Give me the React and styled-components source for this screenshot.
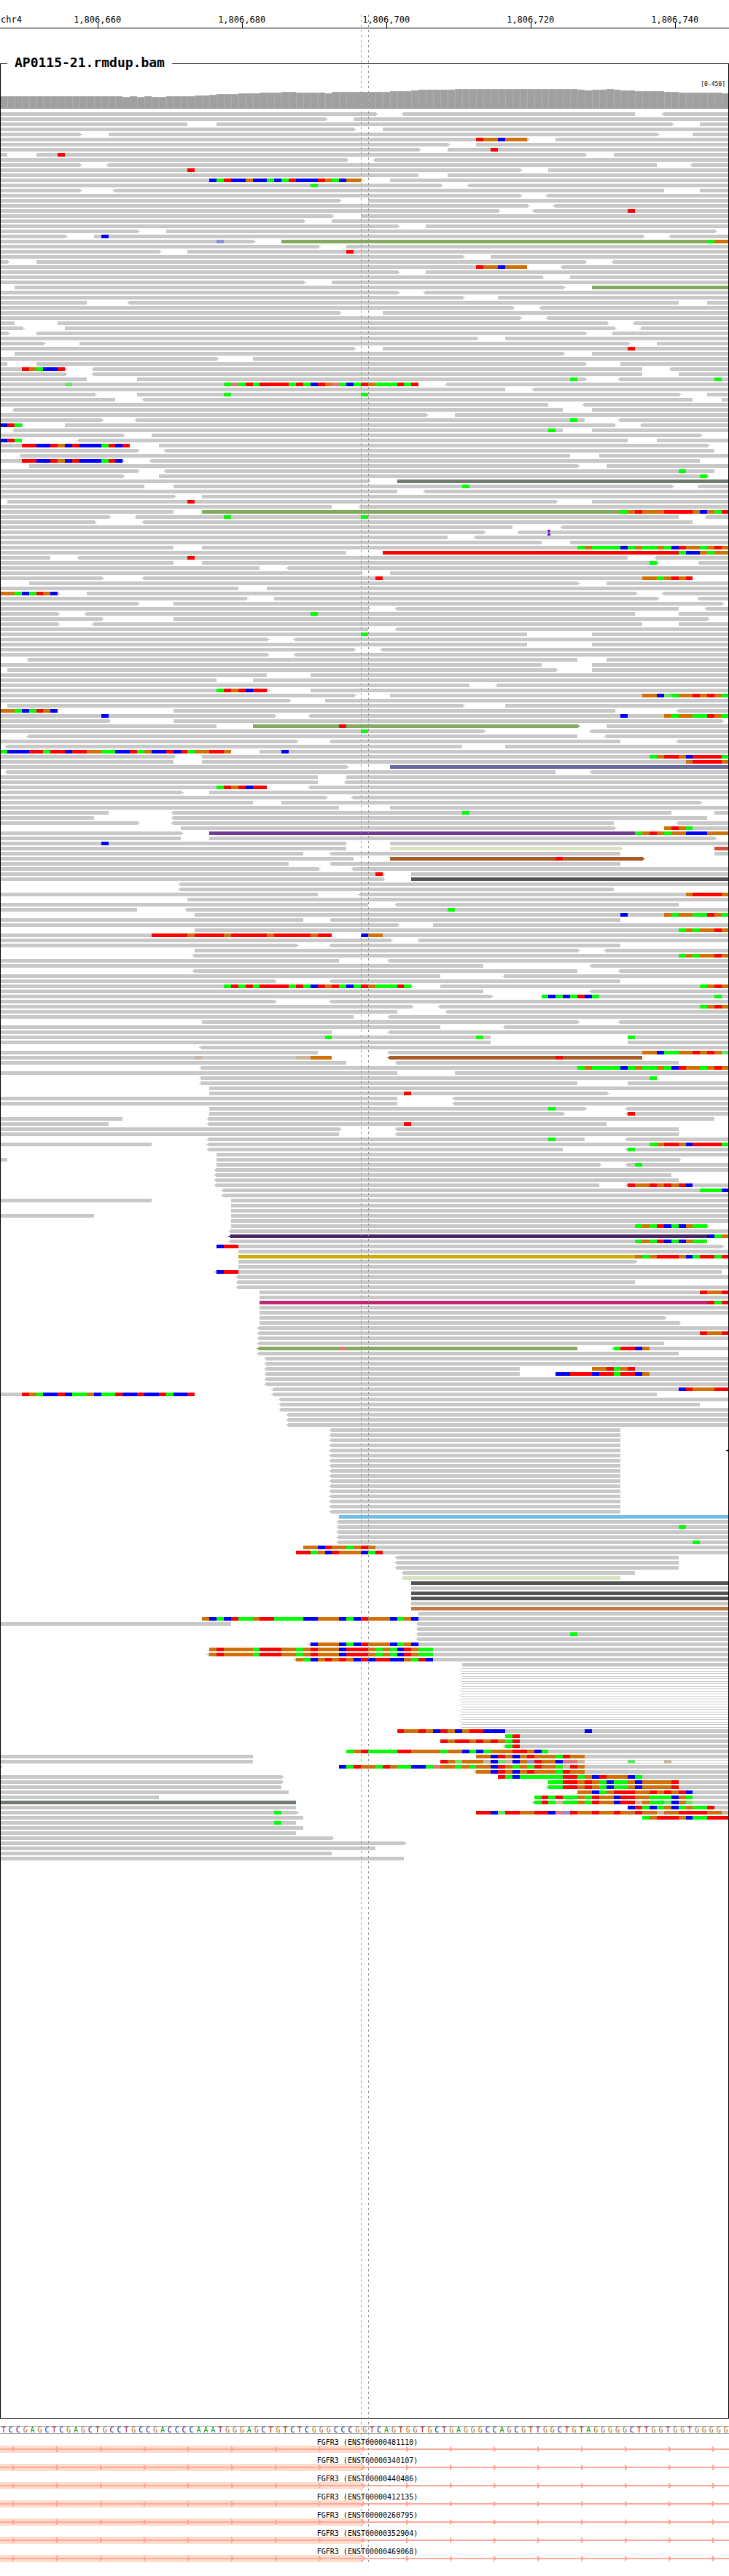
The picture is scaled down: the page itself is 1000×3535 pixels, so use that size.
import React from "react";
import styled, { createGlobalStyle, css } from "styled-components";

const BASES = 101;
const ROW_PITCH = 7;
const READ_HEIGHT = 5;
const pct = (bases) => `${(bases / BASES) * 100}%`;

const BASE_COLORS = {
  A: "#00ff00",
  C: "#0000ff",
  G: "#d17105",
  T: "#ff0000",
  a: "#64e364",
  c: "#8e8edc",
  g: "#cbb49c",
  t: "#e07676",
};

const LETTER_COLORS = { A: "#109610", C: "#14148c", G: "#a66a1e", T: "#aa1010" };

/* Fill of a read, keyed by the letter in front of its span. */
const READ_COLORS = {
  "": "#c8c8c8",
  v: "#86a960",
  s: "#6f7a70",
  r: "#ff0000",
  i: "#666a9f",
  p: "#703a94",
  l: "#d8e3c0",
  o: "#d9503a",
  n: "#a85b26",
  d: "#545454",
  u: "#4b2666",
  y: "#d4ab00",
  m: "#be2773",
  b: "#6ebee6",
  k: "#c67742",
  x: "#222222",
};

const SEQUENCE =
  "TCCGAGCTCGAGCTGCCTGCCGACCCCAAATGGGAGCTGTCTCGGGCCCGG" +
  "TCAGTGGTGCTGAGGGCCAGCGTTGGCTGTAGGGGGCTTGGTGGTGGGGG";

/* One line per row. "<12-40>" is a read with its strand arrows, "12:ACG" a run
   of mismatched bases, "12!" an insertion; an open end runs off the view. */
const ROWS = `-52> <56-88 <92-
-45> 49-
-26 30-93> 97-
-49> 53-
-11> 15-91> 96-
-73> 77- 66:TGGCGGG
-62> 66-
-58> 62- 68:T
-1 5-81> 85- 8:T
-48> <52-
-11> <15-91 <96-
-72> 76- 26:T
-58 62-
-50> 54- 29:CATCCGCCACATCCCTGACGG
-61> <65- 43:A
-11> <16-92 97-
-72> <76-
-47> 51-
-73> <77-
-69> <74- 87:T
-46> 50-
-42> 46-
-55> 59-
-19> 23-99>
-9> 13-89> <93- 14:C
-35> v39- 30:c 98:AGG
-44> 48-
-22> 26- 48:T
-64> 68-
-1> 5-81> <85-
-73 <78- 66:TGGCGGG
-55> 59-
-75> 79-
-42> 46-
2-78> v82-
-55> <59-
-64> 69-
-12 <18-94 98-
-71> <75-
-47> 53-
-72> <76-
-2 8-84> <88-
-3> 9-85> <89-
-1> 5-81> <85-
-66> 70-
-6> 11-87> 91-
-49> 53- 87:T
2-78> 82-
-30> 35-
-1 5-81> 86-
-9> <13-89 <93- 3:TGACCT
-9> <13-89 94-
-12 19-81> <86- 79:A 99:A
-58 <62- 9:a 31:AtATATTTTATACTGtACATGAAATAT
-70 <74-
-13> 19-94> 98- 31:A 50:A
-16 <20-96 100-
-76 <81-
<2-78 82-
-59> 63-
-14> <19-81 <86- 79:A
-3> 9-85> <89- 0:CTA
<2-78 82- 76:A
-17> 21-97>
-3 <11-87 91- 0:CTA
-18 22-98> 3:TTCCTGCTCCCATCT
-19> <23-99
<3-79 83-
-17> <21-97 3:TTCCTGCTCCCATC
4-80> 84-
-19> <23-99 94:A
-17> 22-98> 97:A
-51> s55-
-20 24-93> <97- 64:A
-55 <59-
-24> 28-
1-77> 82- 26:T
-46 <50-
-24 v28- 86:AGTGGGTTTTGCGAT
-15> <19-94 <98- 31:A 50:A
-13> <20-96
-71 <78-
-67> <72- 76!
-62 <66-
-75 79-
-24 28- 80:AGAAAACAGAAGACTGGAGTG
-48 r53- 94:ACCGAGG
-7 <11-87 <91- 26:T
-24 28-91> <97- 90:A
-36 <40-
-50> 54-
-14> <20-96 52:T 89:GGAGTGT
4-80> 84-
-33 37-
-8> 12-88> <92- 0:GGACATGC
-34> 38-91> <97-
-19> 24-100>
-51> <55-94 <98-
-8> <12-88 94- 43:A
-14> 24-98>
-8> <13-89 94-
-51 <55-
-73 82- 50:A
-37> <41-
-73 82-
-49> <53-
-37> <41-
<4-80 84-
-75 82-
1-77> 82-
-37 43-
-30 35-
-65 <69-
-37> 43- 30:ATGTCTT
-49> 54- 89:GGCaAGGTGTGA
-40> 45-
1-64> 70-
-8 24-85> <94- 0:GGACATGC
-38> <43- 14:C 86:C 92:GAGGAATGA
-15> 24-100>
-30 v35-80> 84- 47:T
-67> <82- 50:A
<4-80 <84-
-41> <46-86 <94-
<1-64 70-
-32 36- 39:C 0:ACCCTTATTCTTGGAACCTAGCCTCTAGGTTG
-24> 28- 90:AGTTGCTTTTA
-24 28- 95:GTTTTG
-48> i54-
<1-77 <82-
-44 48-
-44 <48-
-37 <43- 30:ATGTCTT
-25> 29-
-45> <49-
-35 39-97>
-47 54-
-15 <24-93 99- 64:A
-13 <24-98
-19> <24-85 <94-
25-85> 92- 92:GTGA
-25> p29- 88:AGTGAGGCCCGGG
-25 29-99>
-48 54- 14:C
-48 l54-86> o99-
-42 <46-86 99-
-49 n54-89> 77:T
-40 <46-86
-44> <49-
-53> 57- 52:T
-53> d57-
<25-
<25-85
-44 <50- 95:GTTTTG
26-
-51 <55-94
-19 <26- 62:A
27- 86:C 92:GAGGAATGA
-42 <46-86
-55> 60-
27- 94:AGAGGTG
-46 50- 21:TTTTTGTTTTGTTTTTGTTTTTGTT 50:CGG
-54> 58-
-41> <46-86
27-80> <84-
<27- 94:AGAGGTG
-47 <54-
-67 <82-
<27-80 <86-
-61 <70-
-38> <46-86
-57> 61- 31:ATATATTTTATACTGTACATGAAATA 97:AGTG
-67 <82-
-68> 75- 75:ACACATCA 99:A
-38> <46-
-57> <61- 97:AGTG
-55 <62-
-49 <54-
28-80> <86-
-61 <70-
-46 <54-
-68 87- 45:A 66:A 87:A
-68 87-
<28-
-44 <54- 89:GGCAAGGTGTGa
-46 n<54-89 27:g 41:ggGGG 77:T
-48 <55-94
<28- 80:AGAAAACAGAAGACTGGAGTG
-55 63-
<28-91 90:A
<28-80 87-
29-
29-84> 56:T
-55 <63-
-55 <63-
29-81> <87- 76:A
29-78> <87- 87:T
-17 <29-99
-15 <29-84 56:T
-47> <55-94
-47 <55-94
<29-81 <87- 76:A
-21 <29- 90:AGTTGCTTTTA
<29-78 <87- 87:A
30-
-1 30-94>
30-83> <87- 88:A
<30-
<30-93
<30-94
<30-83 <87- 87:TGGTGTGTC
<31- 97:AAAC
<31-
-21 32-
32-
32-
-13 32-
32-
32-98> 88:AGATCACGAA
<32-
u<32- 98:CAG
<32-98 88:AGATCACGAA
30-100> 30:CTT
33-
y33- 88:GAGTTTGCATTAT
33-88>
33-
<30-100 30:CTT
<33-
<33-88
<33-
36- 97:TGGT
36-
m36- 98:TAT
36-
36-
36-92>
36-94>
<36-
<36- 97:TGGT
<36-
<36-92
v<36-80 <85- 47:t 85:ATTCG
<36-94
<37-
<37-
<37-72 82- 82:GGTAGT
<37-72 77- 77:CCTTTCTTATTCG
<37-
<37-
<38- 94:CTGGGTT
-27 <38-91 3:TGACCTCAAGCAATCCTCCTACCT
<39-
<39-97
<39-
<40-
<40-
<40-
<46-86
<46-86
<46-86
<46-86
<46-86 x<101-
<46-86
<46-86
<46-86
<46-86
<46-86
<46-86
<46-86
<46-86
<46-86
<46-86
<46-86
<46-86
b47-
<47-
<47- 94:A
<47-
<47-
<47- 96:A
42- 42:GGCTGGAGTG
41- 41:TTAGCTGGGCAT
<55-94
<55-94
<55-94
<56-88
l<56-86
d57-
57-
d57-
d57-
57-
k57-
58-
28- 28:GCACTAAGTTAAAACCGGGCACTGGGCAGC
-32 <58-
<58-
<58- 79:A
<58-
<43- 43:CGGGCACTGGGCAGC
29- 29:GTGGGGATTTGGAGTGGGCTTTGAGACTGAA
<29- 29:GTGGGGATTTGGAGTGGGCTTTGAGACTGAA
<41- 41:GACGTGTGCTCTTCCGATC
64-
h<64-
h<64-
h<64-
h<64-
h<64-
h<64-
h<64-
h<64-
h<64-
h<64-
h<64-
h<64-
55- 55:TGGTGCTGCGTTCCC 81:C
70- 70:AT
61- 61:TGTTGTGTGAT
<70- 70:AT
48- 48:AGTAAAATTGGGGAGGCACAGGGTTGCA
-35 66- 66:GGCTGCGTGGGATGG
-35 h61- 61:TGaGGGgCagCGcTGGCttg 87:a 92:g
-0> 47- 47:CATGGATGAACCAtGGAGAGGCTGAGATGGAgTG
<66- 66:GGCTGCGTGGGATGG
-39> 69- 69:TACAAAAAATTAGCTGGGCA
-39> 76- 76:AATTGTGACAAGCGGGGT
-39 <76- 76:AATTGTGACAAGCGGGGT
-40 80- 80:GGCAGTTTGGTGTGTC
-22 74- 74:ATATAAGATGGCTTGGAAACGA
s-41 <74- 74:ATAgAAGATGGCTTgGAAaCGa
-41 87- 87:CTACAGCAGAAT
-41> 66- 38:A 66:TTCaTTGGTTCtcTGGTGGTGGTGGgGGTTTTGGg
-42 89- 89:AGTTTGCAATTT
-41 38:A
-42
-41
-46>
-56>
-52
-46
-56`.split("\n");

/* [bases, bar height] runs, left to right */
const COVERAGE = [
  [17, 16], [1, 15], [1, 16], [1, 15], [1, 16], [2, 15], [4, 16], [2, 17],
  [1, 18], [3, 19], [3, 20], [3, 21], [2, 22], [4, 21], [1, 20], [8, 22],
  [3, 23], [1, 24], [5, 25], [17, 26], [1, 25], [1, 24], [2, 25], [1, 26],
  [1, 25], [2, 24], [4, 23], [2, 22], [6, 21], [1, 20],
].flatMap(([count, height]) => Array(count).fill(height));

const TICKS = ["1,806,660", "1,806,680", "1,806,700", "1,806,720", "1,806,740"];

const TRANSCRIPTS = [
  "ENST00000481110",
  "ENST00000340107",
  "ENST00000440486",
  "ENST00000412135",
  "ENST00000260795",
  "ENST00000352904",
  "ENST00000469068",
];

const mono = css`
  font-family: "DejaVu Sans Mono", "Liberation Mono", monospace;
`;

const GlobalStyle = createGlobalStyle`
  body {
    margin: 0;
    background: #fff;
    color: #000;
  }
`;

const Page = styled.main`
  ${mono}
  position: relative;
  padding-top: 20px;
  margin-bottom: 19px;
  overflow: hidden;
`;

const Guide = styled.div`
  position: absolute;
  top: 20px;
  bottom: 0;
  left: ${(p) => pct(p.$base)};
  width: 1px;
  pointer-events: none;
  background: repeating-linear-gradient(#939393 0 3px, transparent 3px 7px);
`;

const Axis = styled.header`
  display: flex;
  height: 18px;
  overflow: hidden;
  border-bottom: 1px solid #000;
  font-size: 12px;
  line-height: 15px;
  white-space: nowrap;
`;

const Chromosome = styled.div`
  flex: none;
  width: ${pct(3.5)};
  text-indent: 1px;
`;

const Tick = styled.div`
  flex: none;
  width: ${pct(20)};
  text-align: center;

  &::after {
    content: "";
    display: block;
    width: 1px;
    height: 7px;
    margin: -4px 0 0 50%;
    background: #000;
  }
`;

const Panel = styled.fieldset`
  min-width: 0;
  margin: 38px 0 0;
  padding: 0 0 763px;
  border: 1px solid #000;
`;

const PanelTitle = styled.legend`
  margin-left: 9px;
  padding: 0 10px 4px;
  font-size: 18px;
  font-weight: bold;
  line-height: 17px;
`;

const PanelBody = styled.div`
  overflow: hidden;
`;

const RangeLabel = styled.div`
  height: 10px;
  padding: 12px 4px 0 0;
  text-align: right;
  font-size: 8px;
  line-height: 11px;
`;

const Chart = styled.svg`
  display: block;
  width: calc(100% + 2px);
  height: ${(p) => p.$height}px;
  margin: 0 -1px ${(p) => p.$gap || 0}px;
  shape-rendering: crispEdges;
  overflow: visible;
`;

const SequenceBar = styled.div`
  display: flex;
  height: 9px;
  margin-top: 10px;
  border: solid #9ca69c;
  border-width: 1px 0;
  font-size: 10px;
  line-height: 10px;
`;

const Nucleotide = styled.span`
  flex: 1 1 0;
  min-width: 0;
  text-align: center;
  color: ${(p) => LETTER_COLORS[p.$base]};
`;

const Transcripts = styled.section`
  padding-top: 1px;
`;

const Transcript = styled.div`
  height: 25px;
`;

const TranscriptName = styled.div`
  height: 10px;
  padding: 5px 0 0 8px;
  text-align: center;
  font-size: 10px;
  line-height: 12px;
`;

const TranscriptShape = styled.svg`
  display: block;
  width: 100%;
  height: 10px;
  shape-rendering: crispEdges;
`;

function parseRow(text) {
  const row = { reads: [], runs: [], insertions: [] };
  text.split(" ").forEach((token) => {
    const read = token.match(/^([a-z]?)(<?)(\d*)-(\d*)(>?)$/);
    if (read) {
      row.reads.push({
        kind: read[1],
        left: read[2] === "<",
        start: read[3] ? Number(read[3]) : 0,
        end: read[4] ? Number(read[4]) : BASES,
        right: read[5] === ">",
      });
      return;
    }
    if (token.endsWith("!")) {
      row.insertions.push(parseInt(token, 10));
      return;
    }
    const [start, letters] = token.split(":");
    let at = Number(start);
    letters.match(/(.)\1*/g).forEach((run) => {
      row.runs.push({ start: at, length: run.length, base: run[0] });
      at += run.length;
    });
  });
  return row;
}

const PARSED_ROWS = ROWS.map(parseRow);

function Arrow({ base, y, side, fill, hollow }) {
  const d = side === "left"
    ? "M0 0H-1V1H-2V2H-4V3H-2V4H-1V5H0Z"
    : "M0 0H1V1H2V2H4V3H2V4H1V5H0Z";
  return (
    <svg x={pct(base)} y={y} overflow="visible">
      {hollow ? (
        <path d="M-1 0h1v1h-1zM-2 1h1v1h-1zM-4 2h1v1h-1zM-2 3h1v1h-1zM-1 4h1v1h-1z" fill={fill} />
      ) : (
        <path d={d} fill={fill} />
      )}
    </svg>
  );
}

function Read({ read, y }) {
  const hollow = read.kind === "h";
  const fill = hollow ? READ_COLORS[""] : READ_COLORS[read.kind];
  const x = pct(read.start);
  const width = pct(read.end - read.start);
  return (
    <>
      {hollow ? (
        <>
          <rect x={x} y={y} width={width} height={1} fill={fill} />
          <rect x={x} y={y + READ_HEIGHT - 1} width={width} height={1} fill={fill} />
        </>
      ) : (
        <rect x={x} y={y} width={width} height={READ_HEIGHT} fill={fill} />
      )}
      {read.left && <Arrow base={read.start} y={y} side="left" fill={fill} hollow={hollow} />}
      {read.right && <Arrow base={read.end} y={y} side="right" fill={fill} />}
    </>
  );
}

function Pileup() {
  return (
    <Chart $height={PARSED_ROWS.length * ROW_PITCH} role="img" aria-label="Aligned reads">
      {PARSED_ROWS.map((row, i) => {
        const y = i * ROW_PITCH;
        return (
          <g key={i}>
            {row.reads.map((read, j) => (
              <Read key={j} read={read} y={y} />
            ))}
            {row.runs.map((run, j) => (
              <rect
                key={j}
                x={pct(run.start)}
                y={y}
                width={pct(run.length)}
                height={READ_HEIGHT}
                fill={BASE_COLORS[run.base]}
              />
            ))}
            {row.insertions.map((at) => (
              <svg key={at} x={pct(at)} y={y} overflow="visible">
                <path d="M-1 -1h4v2h-1v4h1v2h-4v-2h1v-4h-1z" fill="#6a1fe0" />
              </svg>
            ))}
          </g>
        );
      })}
    </Chart>
  );
}

function CoverageChart() {
  return (
    <Chart $height={29} $gap={5} role="img" aria-label="Coverage">
      {COVERAGE.map((height, i) => (
        <React.Fragment key={i}>
          <rect x={pct(i)} y={28 - height} width={pct(1)} height={height} fill="#afafaf" />
          <svg x={pct(i)} y={29 - height} width={pct(1)} height={height - 1}>
            <rect x="1" width="100%" height="100%" fill="#a0a0a0" />
          </svg>
        </React.Fragment>
      ))}
      <rect y="28" width="100%" height="1" fill="#767676" />
    </Chart>
  );
}

function TranscriptTrack({ id }) {
  const pattern = `strand-${id}`;
  return (
    <Transcript>
      <TranscriptName>FGFR3 ({id})</TranscriptName>
      <TranscriptShape aria-hidden="true">
        <defs>
          <pattern id={pattern} x="17" width="60" height="10" patternUnits="userSpaceOnUse">
            <path d="M0 1h1v1h1v1h1v1h1v2h-1v1h-1v1h-1v1h-1z" fill="#ffa899" />
          </pattern>
        </defs>
        <rect width={pct(50)} height="10" fill="#ffdccc" />
        <rect y="4" width="100%" height="2" fill="#ffa899" />
        <rect width="100%" height="10" fill={`url(#${pattern})`} />
      </TranscriptShape>
    </Transcript>
  );
}

export default function App() {
  return (
    <>
      <GlobalStyle />
      <Page>
        <Axis>
          <Chromosome>chr4</Chromosome>
          {TICKS.map((tick) => (
            <Tick key={tick}>{tick}</Tick>
          ))}
        </Axis>
        <Panel>
          <PanelTitle>AP0115-21.rmdup.bam</PanelTitle>
          <PanelBody>
            <RangeLabel>[0-450]</RangeLabel>
            <CoverageChart />
            <Pileup />
          </PanelBody>
        </Panel>
        <SequenceBar>
          {[...SEQUENCE].map((base, i) => (
            <Nucleotide key={i} $base={base}>
              {base}
            </Nucleotide>
          ))}
        </SequenceBar>
        <Transcripts>
          {TRANSCRIPTS.map((id) => (
            <TranscriptTrack key={id} id={id} />
          ))}
        </Transcripts>
        <Guide $base={50} />
        <Guide $base={51} />
      </Page>
    </>
  );
}
